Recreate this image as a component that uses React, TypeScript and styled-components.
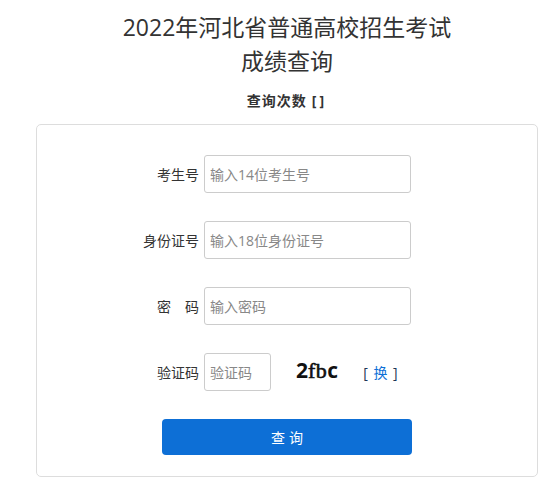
import styled, { createGlobalStyle } from 'styled-components';

const GlobalStyle = createGlobalStyle`
    body {
        margin: 0;
        background: #fff;
        font-family: "Open Sans", "Noto Sans CJK SC", sans-serif;
        color: #333;
    }
`;

const Page = styled.div`
    width: 502px;
    margin-left: 36px;
    padding-top: 10px;
`;

const Title = styled.h1`
    margin: 0;
    font-size: 23px;
    line-height: 34px;
    font-weight: normal;
    text-align: center;
    color: #333;
`;

const Counter = styled.div`
    margin: 13px 0 13px;
    font-size: 14px;
    line-height: 20px;
    font-weight: bold;
    letter-spacing: 1px;
    text-align: center;
`;

const Brackets = styled.span`
    margin-left: 5px;
    letter-spacing: 3px;
`;

const Card = styled.div`
    border: 1px solid #ddd;
    border-radius: 5px;
    padding: 30px 0 21px;
`;

const Row = styled.div`
    display: flex;
    align-items: center;
    margin-bottom: 28px;
`;

const Label = styled.label`
    width: 162px;
    margin-right: 5px;
    text-align: right;
    font-size: 14px;
    color: #333;
`;

const Input = styled.input<{ w?: number }>`
    box-sizing: border-box;
    width: ${(p) => p.w ?? 207}px;
    height: 38px;
    border: 1px solid #ccc;
    border-radius: 3px;
    padding: 0 5px;
    font-size: 14px;
    font-family: "Open Sans", "Noto Sans CJK SC", sans-serif;
    outline: none;
    &::placeholder {
        color: #888;
    }
`;

const Captcha = styled.span`
    margin-left: 25px;
    margin-top: -4px;
    font-size: 21px;
    font-weight: bold;
    color: #111;
`;

const Serif = styled.span`
    font-family: "Liberation Serif", "DejaVu Serif", serif;
    font-weight: normal;
    font-size: 22px;
    letter-spacing: 0.5px;
    -webkit-text-stroke: 0.6px #111;
`;

const Swap = styled.span`
    margin-left: 25px;
    font-size: 14px;
    color: #1d3557;
    word-spacing: 2px;
`;

const SwapLink = styled.a`
    color: #0d6fd6;
    text-decoration: none;
`;

const Submit = styled.button`
    display: block;
    margin-left: 125px;
    width: 250px;
    height: 36px;
    border: none;
    border-radius: 4px;
    background: #0d6fd6;
    color: #fff;
    font-size: 14px;
    font-family: "Open Sans", "Noto Sans CJK SC", sans-serif;
    letter-spacing: 4px;
    text-indent: 4px;
`;

export default function App() {
    return (
        <>
            <GlobalStyle />
            <Page>
                <Title>2022年河北省普通高校招生考试<br />成绩查询</Title>
                <Counter>查询次数<Brackets>[]</Brackets></Counter>
                <Card>
                    <Row>
                        <Label>考生号</Label>
                        <Input placeholder="输入14位考生号" />
                    </Row>
                    <Row>
                        <Label>身份证号</Label>
                        <Input placeholder="输入18位身份证号" />
                    </Row>
                    <Row>
                        <Label>密　码</Label>
                        <Input type="password" placeholder="输入密码" />
                    </Row>
                    <Row>
                        <Label>验证码</Label>
                        <Input w={67} placeholder="验证码" />
                        <Captcha>2<Serif>fb</Serif>c</Captcha>
                        <Swap>[ <SwapLink href="#">换</SwapLink> ]</Swap>
                    </Row>
                    <Submit>查询</Submit>
                </Card>
            </Page>
        </>
    );
}
